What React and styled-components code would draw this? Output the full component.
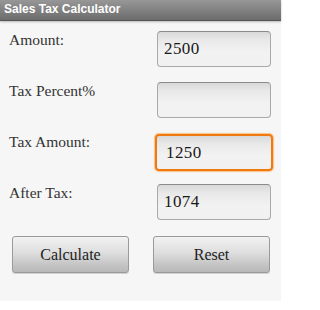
import React from "react";
import styled, { createGlobalStyle, css } from "styled-components";

const Global = createGlobalStyle`
  html, body { margin: 0; padding: 0; background: #ffffff; }
  * { box-sizing: border-box; }
`;

const Screen = styled.div`
  width: 281px;
  height: 301px;
  background: #f6f6f6;
  display: flex;
  flex-direction: column;
`;

const TitleBar = styled.div`
  height: 21px;
  background: linear-gradient(#979797, #6c6c6c);
  border-bottom: 1px solid #555555;
  box-shadow: 0 1px 2px rgba(0, 0, 0, 0.25);
  color: #ffffff;
  font-family: "Liberation Sans", Arial, sans-serif;
  font-weight: bold;
  font-size: 12px;
  line-height: 19px;
  padding-left: 4px;
`;

const Form = styled.div`
  display: flex;
  flex-direction: column;
  gap: 15px;
  padding: 10px 10px 0 9px;
`;

const Row = styled.div`
  display: flex;
  justify-content: space-between;
  align-items: flex-start;
  height: 36px;
`;

const Label = styled.div`
  font-family: "Liberation Serif", "Times New Roman", serif;
  font-size: 15.5px;
  color: #333333;
  line-height: 18px;
`;

const Field = styled.div`
  width: 114px;
  height: 36px;
  border: 1px solid #a9a9a9;
  border-top-color: #8a8a8a;
  border-radius: 4px;
  background: linear-gradient(#d9d9d9 0%, #e9e9e9 25%, #f2f2f2 60%, #f1f1f1 100%);
  font-family: "Liberation Serif", "Times New Roman", serif;
  font-size: 17px;
  letter-spacing: 0.4px;
  color: #1a1a1a;
  padding-left: 6px;
  display: flex;
  align-items: center;
  ${(p) =>
    p.$focused &&
    css`
      width: 118px;
      height: 37px;
      margin-right: -2px;
      margin-top: 1px;
      border: 2px solid #f07a10;
      box-shadow: 0 0 1px 1px rgba(255, 140, 30, 0.5);
      padding-left: 9px;
    `}
`;

const Buttons = styled.div`
  display: flex;
  justify-content: space-between;
  padding: 16px 11px 0 12px;
`;

const Button = styled.div`
  width: 117px;
  height: 37px;
  border: 1px solid #9a9a9a;
  border-radius: 3px;
  background: linear-gradient(#f2f2f2 0%, #dedede 45%, #c4c4c4 80%, #b9b9b9 100%);
  box-shadow: 0 1px 0 rgba(0, 0, 0, 0.15);
  font-family: "Liberation Serif", "Times New Roman", serif;
  font-size: 16px;
  color: #222222;
  display: flex;
  align-items: center;
  justify-content: center;
`;

const rows = [
  { label: "Amount:", value: "2500" },
  { label: "Tax Percent%", value: "" },
  { label: "Tax Amount:", value: "1250", focused: true },
  { label: "After Tax:", value: "1074" },
];

export default function App() {
  return (
    <>
      <Global />
      <Screen>
        <TitleBar>Sales Tax Calculator</TitleBar>
        <Form>
          {rows.map((r) => (
            <Row key={r.label}>
              <Label>{r.label}</Label>
              <Field $focused={r.focused}>{r.value}</Field>
            </Row>
          ))}
        </Form>
        <Buttons>
          <Button>Calculate</Button>
          <Button>Reset</Button>
        </Buttons>
      </Screen>
    </>
  );
}
